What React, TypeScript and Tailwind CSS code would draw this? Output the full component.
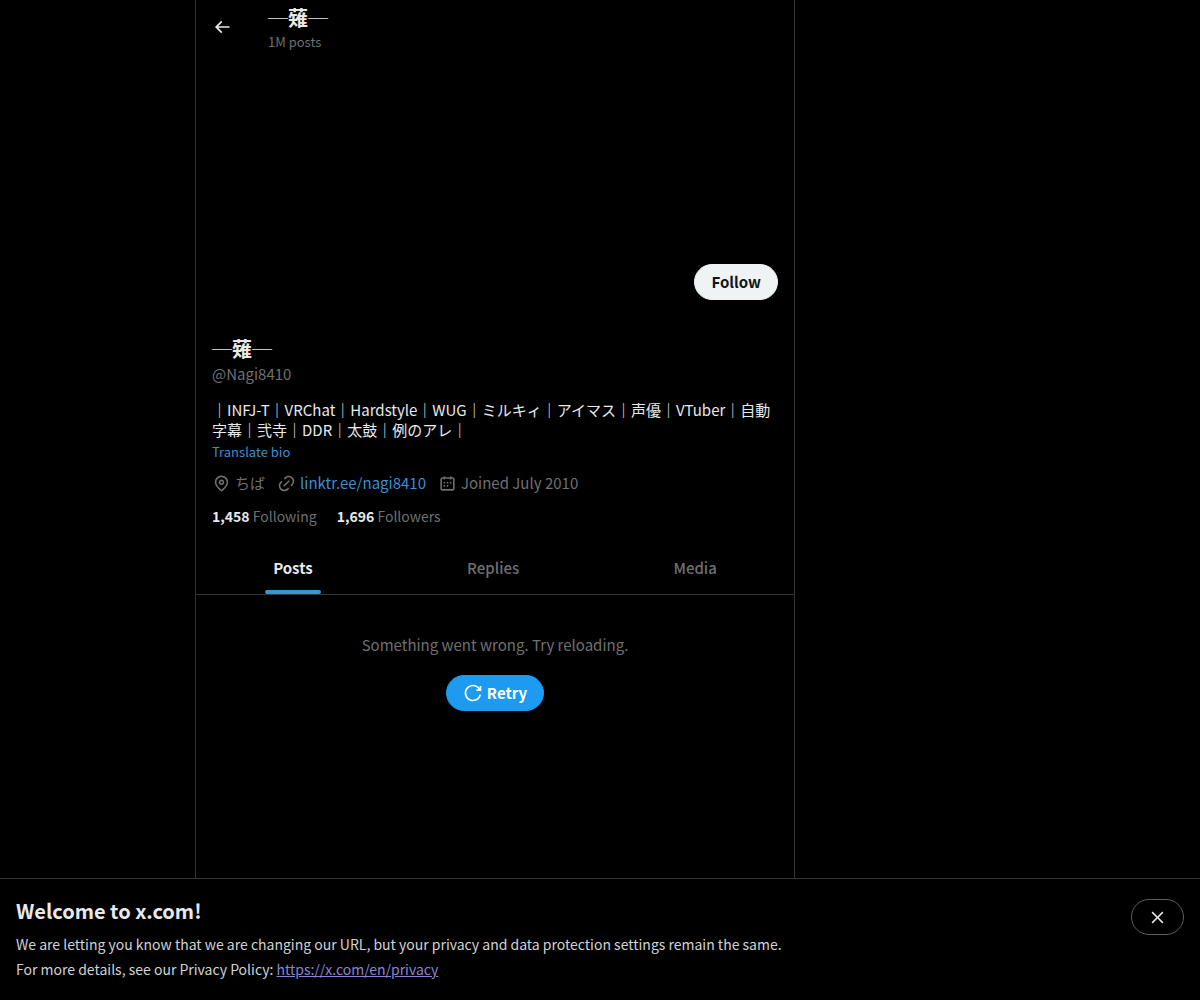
import { useState } from "react";
import type { ReactNode } from "react";
import clsx from "clsx";

const TABS = ["Posts", "Replies", "Media"];

const ICONS = {
  back: "M7.414 13l5.043 5.04-1.414 1.42L3.586 12l7.457-7.46 1.414 1.42L7.414 11H21v2H7.414z",
  location:
    "M12 7c-1.93 0-3.5 1.57-3.5 3.5S10.07 14 12 14s3.5-1.57 3.5-3.5S13.93 7 12 7zm0 5c-.827 0-1.5-.673-1.5-1.5S11.173 9 12 9s1.5.673 1.5 1.5S12.827 12 12 12zm0-10c-4.687 0-8.5 3.813-8.5 8.5 0 5.967 7.621 11.116 7.945 11.332l.555.37.555-.37c.324-.216 7.945-5.365 7.945-11.332C20.5 5.813 16.687 2 12 2zm0 17.77c-1.665-1.241-6.5-5.196-6.5-9.27C5.5 6.916 8.416 4 12 4s6.5 2.916 6.5 6.5c0 4.073-4.835 8.028-6.5 9.27z",
  link: "M18.36 5.64c-1.95-1.96-5.11-1.96-7.07 0L9.88 7.05 8.46 5.64l1.42-1.42c2.73-2.73 7.16-2.73 9.9 0 2.73 2.74 2.73 7.17 0 9.9l-1.42 1.42-1.41-1.42 1.41-1.41c1.96-1.96 1.96-5.12 0-7.07zm-2.12 3.53l-7.07 7.07-1.41-1.41 7.07-7.07 1.41 1.41zm-12.02.71l1.42-1.42 1.41 1.42-1.41 1.41c-1.96 1.96-1.96 5.12 0 7.07 1.95 1.96 5.11 1.96 7.07 0l1.41-1.41 1.42 1.41-1.42 1.42c-2.73 2.73-7.16 2.73-9.9 0-2.73-2.74-2.73-7.17 0-9.9z",
  calendar:
    "M7 4V3h2v1h6V3h2v1h1.5C19.89 4 21 5.12 21 6.5v12c0 1.38-1.11 2.5-2.5 2.5h-13C4.12 21 3 19.88 3 18.5v-12C3 5.12 4.12 4 5.5 4H7zm0 2H5.5c-.27 0-.5.22-.5.5v12c0 .28.23.5.5.5h13c.28 0 .5-.22.5-.5v-12c0-.28-.22-.5-.5-.5H17v1h-2V6H9v1H7V6zm0 6h2v-2H7v2zm0 4h2v-2H7v2zm4-4h2v-2h-2v2zm0 4h2v-2h-2v2zm4-4h2v-2h-2v2z",
  retry:
    "M12 4c-4.418 0-8 3.58-8 8s3.582 8 8 8c3.806 0 6.993-2.66 7.802-6.22l1.95.44C20.742 18.67 16.76 22 12 22 6.477 22 2 17.52 2 12S6.477 2 12 2c3.272 0 6.176 1.57 8 4V3.5h2v6h-6v-2h2.616C17.175 5.39 14.749 4 12 4z",
  close:
    "M10.59 12L4.54 5.96l1.42-1.42L12 10.59l6.04-6.05 1.42 1.42L13.41 12l6.05 6.04-1.42 1.42L12 13.41l-6.04 6.05-1.42-1.42L10.59 12z",
};

function Icon({ name, className }: { name: keyof typeof ICONS; className: string }) {
  return (
    <svg viewBox="0 0 24 24" aria-hidden="true" className={clsx("shrink-0 fill-current", className)}>
      <path d={ICONS[name]} />
    </svg>
  );
}

function Count({ value, children }: { value: string; children: ReactNode }) {
  return (
    <a href="#" className="text-[#6e7072]">
      <span className="font-bold text-[#e7e9ea]">{value}</span> {children}
    </a>
  );
}

export default function App() {
  const [tab, setTab] = useState("Posts");
  const [showNotice, setShowNotice] = useState(true);

  return (
    <div className="grid min-h-screen grid-cols-[minmax(0,195fr)_minmax(0,600px)_minmax(0,405fr)] bg-black font-['Noto_Sans_CJK_JP',sans-serif] text-[15px] leading-5 text-[#e7e9ea]">
      <main className="col-start-2 border-x border-[#333435]">
        <header className="flex h-[53px] items-center px-4">
          <button type="button" aria-label="Back" className="w-14">
            <Icon name="back" className="size-5" />
          </button>
          <div>
            <h2 className="mb-0.5 text-xl leading-7 font-bold">─薙─</h2>
            <p className="text-[13px] leading-4 text-[#6e7072]">1M posts</p>
          </div>
        </header>

        {/* Empty banner */}
        <div className="aspect-[3/1]" />

        <section className="px-4 pt-3">
          <div className="flex h-[71px] items-start justify-end">
            <button
              type="button"
              className="h-9 rounded-full border border-[#eff3f4] bg-[#eff3f4] px-4 font-bold text-[#0f1419]"
            >
              Follow
            </button>
          </div>
          <h1 className="mb-px text-xl leading-7 font-bold">─薙─</h1>
          <p className="text-[#6e7072]">@Nagi8410</p>
          <p className="mt-4">
            ｜INFJ-T｜VRChat｜Hardstyle｜WUG｜ミルキィ｜アイマス｜声優｜VTuber｜自動字幕｜弐寺｜DDR｜太鼓｜例のアレ｜
          </p>
          <button type="button" className="block text-[13px] leading-6 text-[#3b8fd3]">
            Translate bio
          </button>
          <div className="mt-[9px] flex flex-wrap gap-x-3 text-[#6e7072]">
            <span className="flex items-center gap-1">
              <Icon name="location" className="size-[19px]" />
              ちば
            </span>
            <a href="#" className="flex items-center gap-1 text-[#3b8fd3]">
              <Icon name="link" className="size-[19px] text-[#6e7072]" />
              linktr.ee/nagi8410
            </a>
            <span className="flex items-center gap-1">
              <Icon name="calendar" className="size-[19px]" />
              Joined July 2010
            </span>
          </div>
          <div className="mt-[13px] flex gap-5 text-sm leading-5">
            <Count value="1,458">Following</Count>
            <Count value="1,696">Followers</Count>
          </div>
        </section>

        <nav role="tablist" className="mt-[15px] flex h-[54px] border-b border-[#333435]">
          {TABS.map((name) => (
            <button
              key={name}
              type="button"
              role="tab"
              aria-selected={tab === name}
              onClick={() => setTab(name)}
              className="flex flex-auto justify-center px-4"
            >
              <span
                className={clsx(
                  "relative flex h-full items-center",
                  tab === name ? "font-bold" : "font-medium text-[#6e7072]",
                )}
              >
                {name}
                {tab === name && (
                  <span className="absolute bottom-0 left-1/2 h-1 w-14 -translate-x-1/2 rounded-full bg-[#3b94d3]" />
                )}
              </span>
            </button>
          ))}
        </nav>

        <div className="flex flex-col items-center gap-5 px-8 pt-10">
          <p className="text-[#6e7072]">Something went wrong. Try reloading.</p>
          <button
            type="button"
            className="flex h-9 items-center gap-1 rounded-full border border-[#1d9bf0] bg-[#1d9bf0] px-4 font-bold text-white"
          >
            <Icon name="retry" className="size-5" />
            Retry
          </button>
        </div>
      </main>

      {showNotice && (
        <aside className="fixed inset-x-0 bottom-0 flex items-start justify-between border-t border-[#333435] bg-black px-4 pt-5 pb-[18px]">
          <div>
            <h2 className="mb-[9px] text-xl leading-6 font-bold">Welcome to x.com!</h2>
            <p className="text-sm leading-[25px] text-[#d0d2d3]">
              We are letting you know that we are changing our URL, but your privacy and data protection
              settings remain the same.
              <br />
              For more details, see our Privacy Policy:{" "}
              <a href="#" className="text-[#8b83d8] underline">
                https://x.com/en/privacy
              </a>
            </p>
          </div>
          <button
            type="button"
            aria-label="Close"
            onClick={() => setShowNotice(false)}
            className="flex h-9 items-center rounded-full border border-[#5c5e60] px-4"
          >
            <Icon name="close" className="size-[19px]" />
          </button>
        </aside>
      )}
    </div>
  );
}
